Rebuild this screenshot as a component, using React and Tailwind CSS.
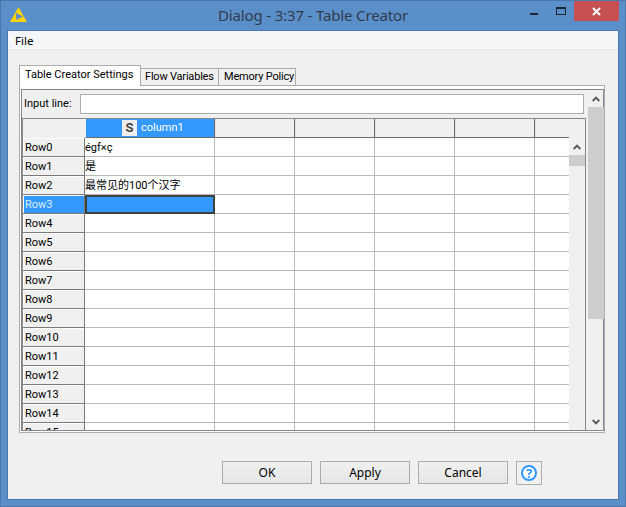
import React from "react";

const font = "font-['Roboto','Noto_Sans_CJK_SC',sans-serif]";
const uiFont = "font-['Noto_Sans',sans-serif]";
const rows = ["Row0", "Row1", "Row2", "Row3", "Row4", "Row5", "Row6", "Row7", "Row8", "Row9", "Row10", "Row11", "Row12", "Row13", "Row14", "Row15"];
const values = ["égf×ç", "是", "最常见的100个汉字"];
const extraCols = ["w-[80px]", "w-[80px]", "w-[80px]", "w-[80px]", "w-[34px]"];

const KnimeLogo = () => (
  <svg width="17" height="15" viewBox="0 0 17 15">
    <path d="M8.5 0 L17 15 L0 15 Z" fill="#fcd20a" />
    <path d="M6 6 L13 9.5 L6 13 Z" fill="#5f8ec4" />
  </svg>
);

const Chevron = ({ down }) => (
  <svg width="8" height="6" viewBox="0 0 8 6" className={down ? "rotate-180" : ""}>
    <path d="M0.7 5 L4 1.6 L7.3 5" fill="none" stroke="#5a5a5a" strokeWidth="2" />
  </svg>
);

const ArrowBox = ({ down }) => (
  <div className="h-[17px] shrink-0 flex items-center justify-center">
    <Chevron down={down} />
  </div>
);

const Button = ({ children }) => (
  <button className={`w-[90px] h-[23px] border border-[#acacac] bg-gradient-to-b from-[#f0f0f0] to-[#e5e5e5] text-[12px] text-black leading-none ${uiFont}`}>
    {children}
  </button>
);

export default function App() {
  return (
    <div className={`w-[626px] h-[507px] overflow-hidden bg-[#5b8fc9] border border-[#4a78ad] flex flex-col ${font}`}>
      {/* title bar */}
      <div className="h-[29px] shrink-0 grid grid-cols-[1fr_auto_1fr]">
        <div className="pl-[9px] pt-[6px]">
          <KnimeLogo />
        </div>
        <div className={`text-[15px] leading-[29px] text-[#2f3c4f] tracking-[-0.15px] ${uiFont}`}>
          Dialog - 3:37 - Table Creator
        </div>
        <div className="flex items-start justify-end pr-[6px]">
          <div className="w-[8px] h-[2px] bg-[#1a2533] mt-[12px] mr-[18px]" />
          <div className="w-[10px] h-[8px] border border-t-2 border-[#1a2533] mt-[6px] mr-[8px]" />
          <div className="w-[45px] h-[20px] bg-[#c75050] flex items-center justify-center">
            <svg width="9" height="9" viewBox="0 0 9 9">
              <path d="M1 1 L8 8 M8 1 L1 8" stroke="#fff" strokeWidth="2" />
            </svg>
          </div>
        </div>
      </div>

      {/* client area */}
      <div className="mx-[6px] mb-[6px] flex-1 min-h-0 border border-[#4a78ad] bg-[#f0f0f0] flex flex-col">
        <div className={`h-[19px] shrink-0 bg-[#f5f6f7] border-b border-[#e8e8e8] text-[11.5px] leading-[19px] text-black pl-[7px] ${uiFont}`}>
          File
        </div>

        {/* tabs */}
        <div className="ml-[11px] mt-[15px] h-[20px] shrink-0 flex items-end text-[11px] text-black whitespace-nowrap">
          <div className="w-[122px] h-[21px] -mb-px relative z-10 bg-white border border-b-0 border-[#acacac] pl-[5px] leading-[18px]">
            Table Creator Settings
          </div>
          <div className="w-[78px] h-[17px] border border-l-0 border-b-0 border-[#acacac] bg-[#f0f0f0] pl-[4px] leading-[16px] tracking-[-0.2px]">
            Flow Variables
          </div>
          <div className="w-[77px] h-[17px] border border-l-0 border-b-0 border-[#acacac] bg-[#f0f0f0] pl-[5px] leading-[16px] tracking-[-0.2px]">
            Memory Policy
          </div>
        </div>

        {/* tab panel */}
        <div className="ml-[11px] w-[586px] h-[348px] shrink-0 border border-[#acacac] bg-white pt-[3px] pb-px pl-px">
          <div className="h-full border border-[#828790] bg-[#f0f0f0] flex">
            <div className="w-[565px] shrink-0 flex flex-col">
              <div className="h-[28px] shrink-0 flex items-center text-[11px] text-black pl-[2px]">
                <span className="w-[56px]">Input line:</span>
                <div className="w-[504px] h-[20px] bg-white border border-[#acacac]" />
              </div>

              {/* table */}
              <div className="w-[564px] flex-1 min-h-0 border-t border-l border-r border-[#828790] flex overflow-hidden">
                <div className="w-[546px] shrink-0 overflow-hidden">
                  <div className="flex h-[19px]">
                    <div className="w-[62px] shrink-0 bg-[#f0f0f0]" />
                    <div className="w-[130px] shrink-0 bg-[#3399ff] border-l border-l-[#f0f0f0] border-r border-r-[#6d6d6d] border-b border-b-[#6d6d6d] flex items-center text-[11px] text-white">
                      <span className="ml-[36px] w-[15px] h-[16px] bg-[#eeeeee] text-[#444] font-bold text-[13px] leading-[16px] text-center">S</span>
                      <span className="ml-[4px]">column1</span>
                    </div>
                    {extraCols.map((w, i) => (
                      <div key={i} className={`${w} shrink-0 bg-[#f0f0f0] border-b border-[#6d6d6d] shadow-[inset_1px_0_0_#e4e4e4] ${i < 4 ? "border-r" : ""}`} />
                    ))}
                  </div>
                  {rows.map((row, i) => {
                    const selected = i === 3;
                    return (
                      <div key={row} className="flex h-[19px] overflow-hidden">
                        <div className={`w-[62px] shrink-0 border-r border-b border-[#7a7a7a] shadow-[inset_1px_1px_0_#ffffff] text-[11px] leading-[19px] pl-[2px] ${selected ? "bg-[#3399ff] text-[#dbeeff]" : "bg-[#f0f0f0] text-black"}`}>
                          {row}
                        </div>
                        <div className={`w-[130px] shrink-0 text-[11px] leading-[19px] text-black ${selected ? "bg-[#3399ff] border-2 border-[#404040]" : "bg-white border-r border-b border-[#b9b9b9]"}`}>
                          {values[i]}
                        </div>
                        {extraCols.map((w, j) => (
                          <div key={j} className={`${w} shrink-0 bg-white border-b border-[#b9b9b9] ${j < 4 ? "border-r" : ""}`} />
                        ))}
                      </div>
                    );
                  })}
                </div>
                {/* grid scrollbar */}
                <div className="w-[16px] shrink-0 pt-[19px] flex flex-col">
                  <ArrowBox />
                  <div className="h-[11px] bg-[#cdcdcd]" />
                </div>
              </div>
            </div>

            {/* outer scrollbar */}
            <div className="w-[16px] ml-px shrink-0 flex flex-col">
              <ArrowBox />
              <div className="flex-1 min-h-0">
                <div className="h-[212px] bg-[#cdcdcd]" />
              </div>
              <ArrowBox down />
            </div>
          </div>
        </div>

        {/* buttons */}
        <div className="mt-[28px] ml-[214px] flex items-start gap-[8px]">
          <Button>OK</Button>
          <Button>Apply</Button>
          <Button>Cancel</Button>
          <div className="w-[26px] h-[24px] border border-[#acacac] bg-[#f0f0f0] flex items-center justify-center">
            <div className={`w-[16px] h-[16px] rounded-full border-2 border-[#3399ff] bg-white text-[#3399ff] text-[13px] font-bold leading-[12px] text-center ${uiFont}`}>?</div>
          </div>
        </div>
      </div>
    </div>
  );
}
